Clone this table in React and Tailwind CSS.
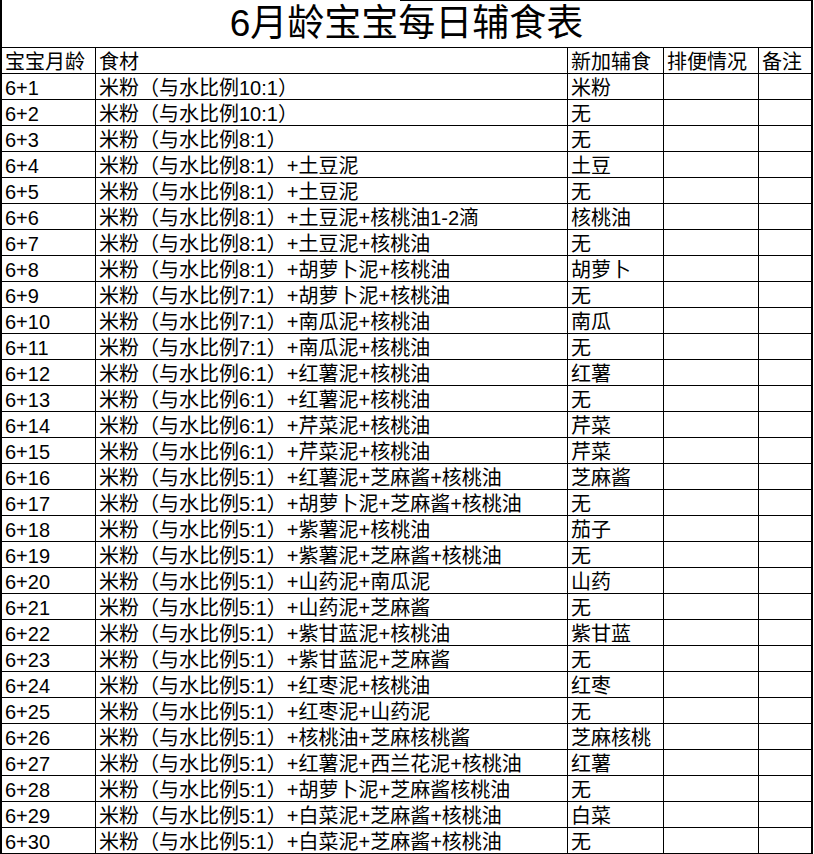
import React from 'react'

const rows = [
    ['6+1', '米粉（与水比例10:1）', '米粉'],
    ['6+2', '米粉（与水比例10:1）', '无'],
    ['6+3', '米粉（与水比例8:1）', '无'],
    ['6+4', '米粉（与水比例8:1）+土豆泥', '土豆'],
    ['6+5', '米粉（与水比例8:1）+土豆泥', '无'],
    ['6+6', '米粉（与水比例8:1）+土豆泥+核桃油1-2滴', '核桃油'],
    ['6+7', '米粉（与水比例8:1）+土豆泥+核桃油', '无'],
    ['6+8', '米粉（与水比例8:1）+胡萝卜泥+核桃油', '胡萝卜'],
    ['6+9', '米粉（与水比例7:1）+胡萝卜泥+核桃油', '无'],
    ['6+10', '米粉（与水比例7:1）+南瓜泥+核桃油', '南瓜'],
    ['6+11', '米粉（与水比例7:1）+南瓜泥+核桃油', '无'],
    ['6+12', '米粉（与水比例6:1）+红薯泥+核桃油', '红薯'],
    ['6+13', '米粉（与水比例6:1）+红薯泥+核桃油', '无'],
    ['6+14', '米粉（与水比例6:1）+芹菜泥+核桃油', '芹菜'],
    ['6+15', '米粉（与水比例6:1）+芹菜泥+核桃油', '芹菜'],
    ['6+16', '米粉（与水比例5:1）+红薯泥+芝麻酱+核桃油', '芝麻酱'],
    ['6+17', '米粉（与水比例5:1）+胡萝卜泥+芝麻酱+核桃油', '无'],
    ['6+18', '米粉（与水比例5:1）+紫薯泥+核桃油', '茄子'],
    ['6+19', '米粉（与水比例5:1）+紫薯泥+芝麻酱+核桃油', '无'],
    ['6+20', '米粉（与水比例5:1）+山药泥+南瓜泥', '山药'],
    ['6+21', '米粉（与水比例5:1）+山药泥+芝麻酱', '无'],
    ['6+22', '米粉（与水比例5:1）+紫甘蓝泥+核桃油', '紫甘蓝'],
    ['6+23', '米粉（与水比例5:1）+紫甘蓝泥+芝麻酱', '无'],
    ['6+24', '米粉（与水比例5:1）+红枣泥+核桃油', '红枣'],
    ['6+25', '米粉（与水比例5:1）+红枣泥+山药泥', '无'],
    ['6+26', '米粉（与水比例5:1）+核桃油+芝麻核桃酱', '芝麻核桃'],
    ['6+27', '米粉（与水比例5:1）+红薯泥+西兰花泥+核桃油', '红薯'],
    ['6+28', '米粉（与水比例5:1）+胡萝卜泥+芝麻酱核桃油', '无'],
    ['6+29', '米粉（与水比例5:1）+白菜泥+芝麻酱+核桃油', '白菜'],
    ['6+30', '米粉（与水比例5:1）+白菜泥+芝麻酱+核桃油', '无'],
]

// one grid cell: right + bottom line, text sits low like Excel
function Cell({ children, last }) {
    return (
        <div
            className={
                'h-[26px] border-b border-black pl-[3px] pt-[2px] leading-[24px] whitespace-nowrap overflow-hidden ' +
                (last ? 'border-r-2' : 'border-r')
            }
        >
            {children}
        </div>
    )
}

export default function App() {
    return (
        <div className="bg-white w-[814px] h-[854px] text-black font-['Liberation_Sans','Noto_Sans_CJK_SC',sans-serif]">
            <div className="w-[813px] border-l-2 border-black grid grid-cols-[94px_472px_96px_95px_54px] text-[20px]">
                {/* title, the top rule only shows on the right part of the crop */}
                <div className="col-span-5 h-[48px] border-b border-r-2 border-black flex flex-col">
                    <div className="h-[1px] ml-[398px] bg-black"></div>
                    <div className="flex-1 flex items-end justify-center pb-[1px] text-[37px] leading-[44px]">
                        6月龄宝宝每日辅食表
                    </div>
                </div>

                {/* header */}
                <Cell>宝宝月龄</Cell>
                <Cell>食材</Cell>
                <Cell>新加辅食</Cell>
                <Cell>排便情况</Cell>
                <Cell last>备注</Cell>

                {rows.map(([age, food, added]) => (
                    <React.Fragment key={age}>
                        <Cell>{age}</Cell>
                        <Cell>{food}</Cell>
                        <Cell>{added}</Cell>
                        <Cell></Cell>
                        <Cell last></Cell>
                    </React.Fragment>
                ))}
            </div>
        </div>
    )
}
